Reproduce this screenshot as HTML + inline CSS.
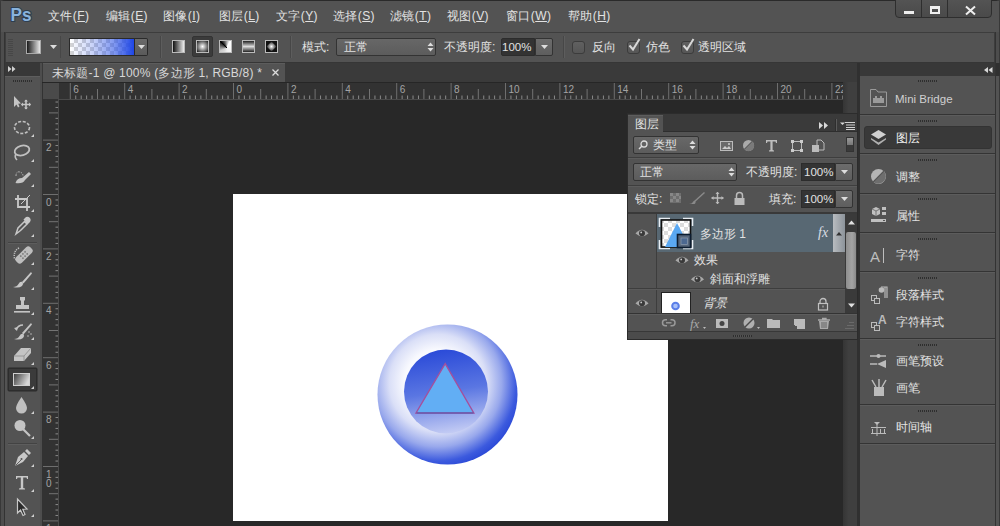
<!DOCTYPE html>
<html><head><meta charset="utf-8">
<style>
*{margin:0;padding:0;box-sizing:border-box}
html,body{width:1000px;height:526px;overflow:hidden;background:#3c3c3c;font-family:"Liberation Sans",sans-serif;color:#dcdcdc}
.a{position:absolute}
svg{position:absolute;overflow:visible}
.t{position:absolute;white-space:nowrap;font-size:12px;line-height:14px;color:#e2e2e2}
/* frame */
#frame{left:0;top:0;width:1000px;height:526px;background:#4d4d4d;border-left:1px solid #383838;border-right:1px solid #383838;border-top:1px solid #2a2a2a;border-radius:5px 5px 0 0}
#menubar{left:1px;top:1px;width:998px;height:31px;background:#535353}
#opts{left:5px;top:32px;width:990px;height:31px;background:#535353;border:1px solid #3d3d3d;border-bottom-color:#363636}
#work{left:42px;top:63px;width:816px;height:463px;background:#282828}
#tabrow{left:42px;top:63px;width:816px;height:19px;background:#3a3a3a}
#tab{left:43px;top:63px;width:242px;height:19px;background:#535353;border-top:1px solid #5c5c5c}
#toolhdr{left:5px;top:63px;width:35px;height:13px;background:#383838}
#tools{left:5px;top:76px;width:35px;height:450px;background:#535353;border-top:1px solid #5e5e5e}
#rulerh{left:42px;top:82px;width:801px;height:18px;background:#323232;border-top:1px solid #262626}
#rulerv{left:42px;top:99px;width:17px;height:427px;background:#323232}
#corner{left:43px;top:83px;width:16px;height:16px;background:#4a4a4a}
#vscroll{left:843px;top:82px;width:14px;height:444px;background:linear-gradient(90deg,#353535,#3f3f3f 40%)}
#doc{left:233px;top:194px;width:435px;height:327px;background:#fff}
#dock{left:857px;top:63px;width:143px;height:463px;background:#303030}
#dockhdr{left:860px;top:63px;width:135px;height:13px;background:#383838}
#dockbody{left:860px;top:76px;width:140px;height:450px;background:#535353;border-right:1px solid #383838}
#dockline{left:995px;top:32px;width:1px;height:494px;background:#333}
#leftline{left:4px;top:32px;width:1px;height:494px;background:#333}
.rn{position:absolute;font-size:10px;line-height:10px;color:#a4a4a4;font-family:"Liberation Sans",sans-serif}
.sep{position:absolute;left:860px;width:135px;height:2px;background:#343434;border-bottom:1px solid #5c5c5c}
.grip{position:absolute;width:19px;height:2px;background:repeating-linear-gradient(90deg,#2e2e2e 0 1px,#535353 1px 2px)}
#layers{left:627px;top:113px;width:231px;height:227px;background:#535353;border:1px solid #2c2c2c}
</style></head><body>
<div id="frame" class="a"></div>
<div id="menubar" class="a"></div>
<svg style="left:0;top:0" width="60" height="32"><text x="10.5" y="21" font-family="Liberation Sans" font-weight="700" font-size="19" fill="#2a3c52" stroke="#2e3e50" stroke-width="2.2" textLength="21" lengthAdjust="spacingAndGlyphs">Ps</text><text x="10.5" y="21" font-family="Liberation Sans" font-weight="700" font-size="19" fill="#88b2dc" textLength="21" lengthAdjust="spacingAndGlyphs">Ps</text></svg>
<div class="t" style="left:48px;top:9px;letter-spacing:0.4px">文件(<u>F</u>)</div>
<div class="t" style="left:106px;top:9px;letter-spacing:0.4px">编辑(<u>E</u>)</div>
<div class="t" style="left:163px;top:9px;letter-spacing:0.4px">图像(<u>I</u>)</div>
<div class="t" style="left:219px;top:9px;letter-spacing:0.4px">图层(<u>L</u>)</div>
<div class="t" style="left:276px;top:9px;letter-spacing:0.4px">文字(<u>Y</u>)</div>
<div class="t" style="left:333px;top:9px;letter-spacing:0.4px">选择(<u>S</u>)</div>
<div class="t" style="left:390px;top:9px;letter-spacing:0.4px">滤镜(<u>T</u>)</div>
<div class="t" style="left:447px;top:9px;letter-spacing:0.4px">视图(<u>V</u>)</div>
<div class="t" style="left:506px;top:9px;letter-spacing:0.4px">窗口(<u>W</u>)</div>
<div class="t" style="left:568px;top:9px;letter-spacing:0.4px">帮助(<u>H</u>)</div>
<!-- window buttons -->
<div class="a" style="left:895px;top:-4px;width:97px;height:22px;background:linear-gradient(#555,#4a4a4a);border:1px solid #2e2e2e;border-radius:4px"></div>
<div class="a" style="left:921px;top:0;width:1px;height:18px;background:#2e2e2e"></div>
<div class="a" style="left:947px;top:0;width:1px;height:18px;background:#2e2e2e"></div>
<div class="a" style="left:904px;top:11px;width:10px;height:3px;background:#eee"></div>
<div class="a" style="left:930px;top:6px;width:10px;height:8px;border:2px solid #eee;border-top-width:3px"></div>
<svg style="left:965px;top:6px" width="11" height="9"><path d="M1 0.5 L10 8.5 M10 0.5 L1 8.5" stroke="#eee" stroke-width="2"/></svg>

<div id="opts" class="a"></div>

<!-- options bar content -->
<div class="a" style="left:8px;top:39px;width:5px;height:17px;background:repeating-linear-gradient(#474747 0 1px,transparent 1px 2px)"></div>
<div class="a" style="left:26px;top:40px;width:15px;height:14px;border:1px solid #aaa;background:linear-gradient(90deg,#1a1a1a,#e8e8e8)"></div>
<svg style="left:50px;top:45px" width="7" height="5"><path d="M0 0 L7 0 L3.5 4Z" fill="#ddd"/></svg>
<div class="a" style="left:60px;top:36px;width:1px;height:22px;background:#474747"></div>
<div class="a" style="left:69px;top:38px;width:66px;height:18px;border:1px solid #2a2a2a;background:linear-gradient(90deg,rgba(40,80,230,0) 0%,rgba(40,80,230,0.25) 35%,rgba(40,80,230,0.6) 70%,rgba(30,70,230,1) 100%),repeating-conic-gradient(#d4d4d4 0 25%,#fff 0 50%) 0 0/8px 8px"></div>
<div class="a" style="left:135px;top:38px;width:13px;height:18px;background:linear-gradient(#6a6a6a,#5a5a5a);border:1px solid #2a2a2a;border-left:0;border-radius:0 2px 2px 0"></div>
<svg style="left:138px;top:45px" width="7" height="5"><path d="M0 0 L7 0 L3.5 4Z" fill="#ddd"/></svg>
<div class="a" style="left:160px;top:36px;width:1px;height:22px;background:#474747"></div>
<div class="a" style="left:161px;top:36px;width:1px;height:22px;background:#5d5d5d"></div>
<div class="a" style="left:172px;top:40px;width:13px;height:13px;border:1px solid #bbb;background:linear-gradient(90deg,#111,#eee)"></div>
<div class="a" style="left:192px;top:36px;width:21px;height:21px;background:#3b3b3b;border:1px solid #333;border-radius:2px"></div>
<div class="a" style="left:196px;top:40px;width:13px;height:13px;border:1px solid #bbb;background:radial-gradient(circle,#fff 0,#222 95%)"></div>
<div class="a" style="left:219px;top:40px;width:13px;height:13px;border:1px solid #bbb;background:conic-gradient(from 315deg at 60% 60%,#000,#fff 20%,#f0f0f0 60%,#ccc 80%,#333 97%,#000)"></div>
<div class="a" style="left:242px;top:40px;width:13px;height:13px;border:1px solid #bbb;background:linear-gradient(#222,#ddd 50%,#222)"></div>
<div class="a" style="left:265px;top:40px;width:13px;height:13px;border:1px solid #bbb;background:#111"></div><svg style="left:266px;top:41px" width="11" height="11"><defs><radialGradient id="dg"><stop offset="0" stop-color="#fff"/><stop offset="1" stop-color="#222"/></radialGradient></defs><path d="M5.5 0.5 L10.5 5.5 L5.5 10.5 L0.5 5.5Z" fill="url(#dg)"/></svg>
<div class="a" style="left:290px;top:36px;width:1px;height:22px;background:#474747"></div>
<div class="a" style="left:291px;top:36px;width:1px;height:22px;background:#5d5d5d"></div>
<div class="t" style="left:302px;top:40px">模式:</div>
<div class="a" style="left:336px;top:38px;width:100px;height:18px;background:linear-gradient(#676767,#5c5c5c);border:1px solid #333;border-radius:2px"></div>
<div class="t" style="left:344px;top:40px">正常</div>
<svg style="left:427px;top:42px" width="7" height="10"><path d="M0.5 4 L3.5 0.5 L6.5 4Z M0.5 6 L3.5 9.5 L6.5 6Z" fill="#ddd"/></svg>
<div class="t" style="left:444px;top:40px">不透明度:</div>
<div class="a" style="left:501px;top:38px;width:34px;height:18px;background:#333;border:1px solid #2c2c2c;border-radius:2px 0 0 2px"></div>
<div class="t" style="left:502px;top:40px;font-size:11.5px">100%</div>
<div class="a" style="left:535px;top:38px;width:18px;height:18px;background:linear-gradient(#6c6c6c,#5e5e5e);border:1px solid #333;border-radius:0 2px 2px 0"></div>
<svg style="left:541px;top:45px" width="7" height="5"><path d="M0 0 L7 0 L3.5 4Z" fill="#ddd"/></svg>
<div class="a" style="left:563px;top:36px;width:1px;height:22px;background:#474747"></div>
<div class="a" style="left:564px;top:36px;width:1px;height:22px;background:#5d5d5d"></div>
<div class="a" style="left:572px;top:41px;width:13px;height:13px;background:linear-gradient(#606060,#565656);border:1px solid #3c3c3c;border-radius:3px"></div>
<div class="t" style="left:592px;top:40px">反向</div>
<div class="a" style="left:627px;top:41px;width:13px;height:13px;background:linear-gradient(#606060,#565656);border:1px solid #3c3c3c;border-radius:3px"></div>
<svg style="left:627px;top:38px" width="15" height="15"><path d="M2.5 7.5 L6 11.5 L12.5 1" stroke="#d8d8d8" stroke-width="2" fill="none"/></svg>
<div class="t" style="left:646px;top:40px">仿色</div>
<div class="a" style="left:681px;top:41px;width:13px;height:13px;background:linear-gradient(#606060,#565656);border:1px solid #3c3c3c;border-radius:3px"></div>
<svg style="left:681px;top:38px" width="15" height="15"><path d="M2.5 7.5 L6 11.5 L12.5 1" stroke="#d8d8d8" stroke-width="2" fill="none"/></svg>
<div class="t" style="left:698px;top:40px">透明区域</div>
<div id="work" class="a"></div>
<div id="tabrow" class="a"></div>
<div id="tab" class="a"></div>

<div class="t" style="left:52px;top:66px;font-size:12px;color:#d8d8d8;letter-spacing:0.2px">未标题-1 @ 100% (多边形 1, RGB/8) *</div>
<svg style="left:272px;top:69px" width="7" height="7"><path d="M0.5 0.5 L6.5 6.5 M6.5 0.5 L0.5 6.5" stroke="#ddd" stroke-width="1.3"/></svg>
<div id="toolhdr" class="a"></div>
<svg style="left:8px;top:66px" width="8" height="6"><path d="M0 0 L3.5 3 L0 6Z M4 0 L7.5 3 L4 6Z" fill="#d0d0d0"/></svg>

<div id="tools" class="a"></div>

<svg style="left:0;top:0" width="45" height="526">
<path d="M13 81 h20" stroke="#2e2e2e" stroke-dasharray="1 1" stroke-width="2"/>
<!-- move -->
<path d="M14 96 L14 107 L16.5 104.5 L18 107.5 L19.5 106.5 L18.2 103.8 L21 103.5Z" fill="#c4c4c4"/>
<path d="M26 100 V109 M21.5 104.5 H30.5" stroke="#c4c4c4" stroke-width="1.6"/>
<path d="M24 101.5 L26 99.5 L28 101.5Z M24 107.5 L26 109.5 L28 107.5Z M23 102.5 L21 104.5 L23 106.5Z M29 102.5 L31 104.5 L29 106.5Z" fill="#c4c4c4"/>
<!-- marquee -->
<ellipse cx="22" cy="127.5" rx="7.5" ry="6" fill="none" stroke="#c0c0c0" stroke-width="1.6" stroke-dasharray="3 1.6"/>
<!-- lasso -->
<ellipse cx="22" cy="150.5" rx="7.5" ry="4.8" fill="none" stroke="#c0c0c0" stroke-width="1.8" transform="rotate(-15 22 150.5)"/>
<path d="M16 154 Q14 157 17 160" stroke="#c0c0c0" stroke-width="1.6" fill="none"/>
<!-- quick select -->
<path d="M16 176 Q16 171 20 172 Q23 173 23 176" stroke="#b8b8b8" stroke-width="1" stroke-dasharray="1.5 1" fill="none"/>
<path d="M15.5 183 Q17 178 22 178 L29 172 L31 174 L25 180 Q23 184 15.5 183Z" fill="#c4c4c4"/>
<!-- crop -->
<path d="M18 195 V207 H30 M15 199 H27 V211" stroke="#c8c8c8" stroke-width="1.8" fill="none"/>
<path d="M21 204 L30 195" stroke="#c8c8c8" stroke-width="1"/>
<!-- eyedropper -->
<path d="M16 234 L18 228 L24.5 221.5 L27 224 L20.5 230.5Z" fill="none" stroke="#c8c8c8" stroke-width="1.5"/>
<path d="M23.5 219.5 L26 217 Q28 216 30 218 Q31.5 220 30 222 L27.5 224.5Z" fill="#c8c8c8"/>
<rect x="8" y="242" width="29" height="1" fill="#434343"/><rect x="8" y="243" width="29" height="1" fill="#5d5d5d"/>
<!-- healing -->
<g transform="rotate(-45 24 255)"><rect x="14" y="251" width="20" height="8" rx="3" fill="#bdbdbd"/><g fill="#7a7a7a"><circle cx="21" cy="253.5" r="0.9"/><circle cx="24" cy="253.5" r="0.9"/><circle cx="27" cy="253.5" r="0.9"/><circle cx="21" cy="256.5" r="0.9"/><circle cx="24" cy="256.5" r="0.9"/><circle cx="27" cy="256.5" r="0.9"/></g></g>
<path d="M19 248 Q13 251 14.5 259" stroke="#bdbdbd" stroke-width="1.5" stroke-dasharray="1.2 1" fill="none"/>
<!-- brush -->
<path d="M31 272 L22 282 L23.5 283.5 L32 273.5Z" fill="#c8c8c8"/>
<path d="M13 287 Q17 287 18.5 284 Q20 281 22.5 282 Q24 284 22 286 Q19 288.5 13 287Z" fill="#c8c8c8"/>
<!-- stamp -->
<path d="M20 297 h5 v3 l-1 1 v4 h5 v4 h-13 v-4 h5 v-4 l-1 -1z" fill="#c4c4c4"/>
<rect x="14" y="311" width="16" height="1.6" fill="#c4c4c4"/>
<!-- history brush -->
<path d="M31 323 L22 333 L23.5 334.5 L32 324.5Z" fill="#c4c4c4"/>
<path d="M14 339 Q18 339 19.5 336 Q21 333 23.5 334 Q25 336 23 338 Q20 340.5 14 339Z" fill="#c4c4c4"/>
<path d="M16 330 Q18 325 23 325" stroke="#c4c4c4" stroke-width="1.4" fill="none"/>
<path d="M14 328 L17 331 L18 327Z" fill="#c4c4c4"/>
<g fill="#bbb"><circle cx="29" cy="332" r="0.8"/><circle cx="31" cy="334" r="0.8"/><circle cx="28" cy="336" r="0.8"/></g>
<!-- eraser -->
<path d="M14 356 L21 348 L31 348 L31 353 L24 361 L14 361Z" fill="#c4c4c4"/>
<path d="M14 356 L24 356 L31 348 M24 356 V361" stroke="#8a8a8a" stroke-width="0.8" fill="none"/>
<!-- gradient selected -->
<rect x="8" y="368" width="29" height="23" rx="1" fill="#303030" stroke="#2a2a2a"/>
<rect x="9" y="369" width="27" height="21" fill="#3b3b3b"/>
<rect x="13.5" y="373.5" width="16" height="12" fill="url(#gr)" stroke="#d0d0d0" stroke-width="1"/>
<defs><linearGradient id="gr" x1="0" y1="0" x2="1" y2="0.4"><stop offset="0" stop-color="#3a3a3a"/><stop offset="1" stop-color="#d8d8d8"/></linearGradient></defs>
<!-- blur -->
<path d="M21.5 397 Q16 405 16 408 A5.5 5.5 0 0 0 27 408 Q27 405 21.5 397Z" fill="#c0c0c0"/>
<!-- dodge -->
<circle cx="20" cy="425.5" r="5.5" fill="#c4c4c4"/>
<path d="M23 429 L30 436" stroke="#c4c4c4" stroke-width="2.2"/>
<rect x="8" y="443" width="29" height="1" fill="#434343"/><rect x="8" y="444" width="29" height="1" fill="#5d5d5d"/>
<!-- pen -->
<path d="M15 466 L18 457 L24 452 L28 456 L23 462Z" fill="#c8c8c8"/>
<path d="M25 451 L27 449 L31 453 L29 455Z" fill="#c8c8c8"/>
<path d="M15.5 465.5 L21 460" stroke="#535353" stroke-width="0.9"/>
<circle cx="21.5" cy="459" r="1" fill="#535353"/>
<!-- type -->
<path d="M16 476 H28 V479 H27 L26.5 477.5 H23.2 V488 L25 488.6 V489.5 H19 V488.6 L20.8 488 V477.5 H17.5 L17 479 H16Z" fill="#c8c8c8"/>
<!-- path select -->
<path d="M17.5 499 L17.5 513 L20.5 510 L23 515.5 L25 514.5 L22.8 509.2 L27 509Z" fill="#2a2a2a" stroke="#c8c8c8" stroke-width="1.2"/>
<!-- little triangles -->
<g fill="#d0d0d0">
<path d="M31 137 h3 v-3z"/><path d="M31 162 h3 v-3z"/><path d="M31 187 h3 v-3z"/><path d="M31 212 h3 v-3z"/><path d="M31 237 h3 v-3z"/>
<path d="M31 265 h3 v-3z"/><path d="M31 290 h3 v-3z"/><path d="M31 315 h3 v-3z"/><path d="M31 340 h3 v-3z"/><path d="M31 365 h3 v-3z"/>
<path d="M31 389 h3 v-3z"/><path d="M31 414 h3 v-3z"/><path d="M31 439 h3 v-3z"/><path d="M31 467 h3 v-3z"/><path d="M31 492 h3 v-3z"/><path d="M31 517 h3 v-3z"/>
</g>
</svg>
<div id="rulerh" class="a"></div>
<div id="rulerv" class="a"></div>
<div id="corner" class="a"></div>
<svg style="left:0;top:0" width="1000" height="526">
<path d="M70.30 83V99 M124.70 83V99 M179.10 83V99 M233.50 83V99 M287.90 83V99 M342.30 83V99 M396.70 83V99 M451.10 83V99 M505.50 83V99 M559.90 83V99 M614.30 83V99 M668.70 83V99 M723.10 83V99 M777.50 83V99 M831.90 83V99 M43 140.10H59 M43 194.50H59 M43 248.90H59 M43 303.30H59 M43 357.70H59 M43 412.10H59 M43 466.50H59 M43 520.90H59" stroke="#6e6e6e" stroke-width="1" fill="none"/>
<path d="M97.50 89V99 M151.90 89V99 M206.30 89V99 M260.70 89V99 M315.10 89V99 M369.50 89V99 M423.90 89V99 M478.30 89V99 M532.70 89V99 M587.10 89V99 M641.50 89V99 M695.90 89V99 M750.30 89V99 M804.70 89V99 M49 112.90H59 M49 167.30H59 M49 221.70H59 M49 276.10H59 M49 330.50H59 M49 384.90H59 M49 439.30H59 M49 493.70H59" stroke="#737373" stroke-width="1" fill="none"/>
<path d="M75.74 95.5V99 M81.18 95.5V99 M86.62 95.5V99 M92.06 95.5V99 M102.94 95.5V99 M108.38 95.5V99 M113.82 95.5V99 M119.26 95.5V99 M130.14 95.5V99 M135.58 95.5V99 M141.02 95.5V99 M146.46 95.5V99 M157.34 95.5V99 M162.78 95.5V99 M168.22 95.5V99 M173.66 95.5V99 M184.54 95.5V99 M189.98 95.5V99 M195.42 95.5V99 M200.86 95.5V99 M211.74 95.5V99 M217.18 95.5V99 M222.62 95.5V99 M228.06 95.5V99 M238.94 95.5V99 M244.38 95.5V99 M249.82 95.5V99 M255.26 95.5V99 M266.14 95.5V99 M271.58 95.5V99 M277.02 95.5V99 M282.46 95.5V99 M293.34 95.5V99 M298.78 95.5V99 M304.22 95.5V99 M309.66 95.5V99 M320.54 95.5V99 M325.98 95.5V99 M331.42 95.5V99 M336.86 95.5V99 M347.74 95.5V99 M353.18 95.5V99 M358.62 95.5V99 M364.06 95.5V99 M374.94 95.5V99 M380.38 95.5V99 M385.82 95.5V99 M391.26 95.5V99 M402.14 95.5V99 M407.58 95.5V99 M413.02 95.5V99 M418.46 95.5V99 M429.34 95.5V99 M434.78 95.5V99 M440.22 95.5V99 M445.66 95.5V99 M456.54 95.5V99 M461.98 95.5V99 M467.42 95.5V99 M472.86 95.5V99 M483.74 95.5V99 M489.18 95.5V99 M494.62 95.5V99 M500.06 95.5V99 M510.94 95.5V99 M516.38 95.5V99 M521.82 95.5V99 M527.26 95.5V99 M538.14 95.5V99 M543.58 95.5V99 M549.02 95.5V99 M554.46 95.5V99 M565.34 95.5V99 M570.78 95.5V99 M576.22 95.5V99 M581.66 95.5V99 M592.54 95.5V99 M597.98 95.5V99 M603.42 95.5V99 M608.86 95.5V99 M619.74 95.5V99 M625.18 95.5V99 M630.62 95.5V99 M636.06 95.5V99 M646.94 95.5V99 M652.38 95.5V99 M657.82 95.5V99 M663.26 95.5V99 M674.14 95.5V99 M679.58 95.5V99 M685.02 95.5V99 M690.46 95.5V99 M701.34 95.5V99 M706.78 95.5V99 M712.22 95.5V99 M717.66 95.5V99 M728.54 95.5V99 M733.98 95.5V99 M739.42 95.5V99 M744.86 95.5V99 M755.74 95.5V99 M761.18 95.5V99 M766.62 95.5V99 M772.06 95.5V99 M782.94 95.5V99 M788.38 95.5V99 M793.82 95.5V99 M799.26 95.5V99 M810.14 95.5V99 M815.58 95.5V99 M821.02 95.5V99 M826.46 95.5V99 M837.34 95.5V99 M842.78 95.5V99 M55.5 102.02H59 M55.5 107.46H59 M55.5 118.34H59 M55.5 123.78H59 M55.5 129.22H59 M55.5 134.66H59 M55.5 145.54H59 M55.5 150.98H59 M55.5 156.42H59 M55.5 161.86H59 M55.5 172.74H59 M55.5 178.18H59 M55.5 183.62H59 M55.5 189.06H59 M55.5 199.94H59 M55.5 205.38H59 M55.5 210.82H59 M55.5 216.26H59 M55.5 227.14H59 M55.5 232.58H59 M55.5 238.02H59 M55.5 243.46H59 M55.5 254.34H59 M55.5 259.78H59 M55.5 265.22H59 M55.5 270.66H59 M55.5 281.54H59 M55.5 286.98H59 M55.5 292.42H59 M55.5 297.86H59 M55.5 308.74H59 M55.5 314.18H59 M55.5 319.62H59 M55.5 325.06H59 M55.5 335.94H59 M55.5 341.38H59 M55.5 346.82H59 M55.5 352.26H59 M55.5 363.14H59 M55.5 368.58H59 M55.5 374.02H59 M55.5 379.46H59 M55.5 390.34H59 M55.5 395.78H59 M55.5 401.22H59 M55.5 406.66H59 M55.5 417.54H59 M55.5 422.98H59 M55.5 428.42H59 M55.5 433.86H59 M55.5 444.74H59 M55.5 450.18H59 M55.5 455.62H59 M55.5 461.06H59 M55.5 471.94H59 M55.5 477.38H59 M55.5 482.82H59 M55.5 488.26H59 M55.5 499.14H59 M55.5 504.58H59 M55.5 510.02H59 M55.5 515.46H59" stroke="#8a8a8a" stroke-width="1" fill="none"/>
<path d="M59 99.5 H843 M58.5 99 V526" stroke="#4a4a4a" stroke-width="1"/>
</svg>
<div class="rn" style="left:73.3px;top:85px">6</div>
<div class="rn" style="left:127.7px;top:85px">4</div>
<div class="rn" style="left:182.1px;top:85px">2</div>
<div class="rn" style="left:236.5px;top:85px">0</div>
<div class="rn" style="left:290.9px;top:85px">2</div>
<div class="rn" style="left:345.3px;top:85px">4</div>
<div class="rn" style="left:399.7px;top:85px">6</div>
<div class="rn" style="left:454.1px;top:85px">8</div>
<div class="rn" style="left:508.5px;top:85px">10</div>
<div class="rn" style="left:562.9px;top:85px">12</div>
<div class="rn" style="left:617.3px;top:85px">14</div>
<div class="rn" style="left:671.7px;top:85px">16</div>
<div class="rn" style="left:726.1px;top:85px">18</div>
<div class="rn" style="left:780.5px;top:85px">20</div>
<div class="rn" style="left:834.9px;top:85px">22</div>
<div class="rn" style="left:46px;top:143.1px">2</div>
<div class="rn" style="left:46px;top:197.5px">0</div>
<div class="rn" style="left:46px;top:251.9px">2</div>
<div class="rn" style="left:46px;top:306.3px">4</div>
<div class="rn" style="left:46px;top:360.7px">6</div>
<div class="rn" style="left:46px;top:415.1px">8</div>
<div class="rn" style="left:46px;top:469.5px">1</div>
<div class="rn" style="left:46px;top:478.5px">0</div>
<div class="rn" style="left:46px;top:523.9px">1</div>
<div class="rn" style="left:46px;top:532.9px">2</div>
<div id="vscroll" class="a"></div>
<div id="doc" class="a"></div>

<svg style="left:370px;top:318px" width="156" height="156">
<defs>
<radialGradient id="og" gradientUnits="userSpaceOnUse" cx="68" cy="65" r="84" fx="68" fy="65">
<stop offset="0" stop-color="#ffffff"/>
<stop offset="0.4" stop-color="#f8f9fe"/>
<stop offset="0.58" stop-color="#dadff7"/>
<stop offset="0.76" stop-color="#98a8ec"/>
<stop offset="0.93" stop-color="#3c5ade"/>
<stop offset="1" stop-color="#2e4cd8"/>
</radialGradient>
<linearGradient id="ig" x1="0.4" y1="0" x2="0.55" y2="1">
<stop offset="0" stop-color="#2a4ad8"/>
<stop offset="0.5" stop-color="#5a76e2"/>
<stop offset="1" stop-color="#c4ccf4"/>
</linearGradient>
</defs>
<circle cx="77.5" cy="76.5" r="70" fill="url(#og)"/>
<circle cx="76" cy="73.5" r="42" fill="url(#ig)"/>
<path d="M75.2 45.7 L46 95 L103.8 95Z" fill="#62aef4" stroke="#a4509c" stroke-width="1.4"/>
<path d="M46.5 95 H103.5" stroke="#4a5ab0" stroke-width="1.2"/>
</svg>
<div id="dock" class="a"></div>
<div id="dockhdr" class="a"></div>
<div id="dockbody" class="a"></div><div id="dockline" class="a"></div><div id="leftline" class="a"></div>
<div id="layers" class="a"></div>
<!-- layers panel -->
<div class="a" style="left:628px;top:114px;width:229px;height:18px;background:#3a3a3a;border-bottom:1px solid #2e2e2e"></div>
<div class="a" style="left:628px;top:115px;width:35px;height:18px;background:#535353;border-top:1px solid #5d5d5d"></div>
<div class="t" style="left:635px;top:117px">图层</div>
<svg style="left:819px;top:122px" width="10" height="7"><path d="M0 0 L4 3.5 L0 7Z M5 0 L9 3.5 L5 7Z" fill="#d8d8d8"/></svg>
<div class="a" style="left:835px;top:119px;width:1px;height:12px;background:#2e2e2e"></div><div class="a" style="left:836px;top:119px;width:1px;height:12px;background:#5a5a5a"></div>
<svg style="left:840px;top:121px" width="16" height="9"><path d="M0 1.5 H5 L2.5 4Z" fill="#d8d8d8"/><path d="M5 1.5 H15 M6 4 H15 M6 6.5 H15 M6 8.5 H15" stroke="#d0d0d0" stroke-width="1"/></svg>
<!-- filter row -->
<div class="a" style="left:633px;top:136px;width:66px;height:18px;background:linear-gradient(#686868,#5c5c5c);border:1px solid #333;border-radius:2px"></div>
<svg style="left:638px;top:140px" width="10" height="10"><circle cx="6" cy="4" r="3" stroke="#ddd" stroke-width="1.3" fill="none"/><path d="M4 6 L1 9" stroke="#ddd" stroke-width="1.5"/></svg>
<div class="t" style="left:653px;top:138px">类型</div>
<svg style="left:689px;top:140px" width="7" height="10"><path d="M0.5 4 L3.5 0.5 L6.5 4Z M0.5 6 L3.5 9.5 L6.5 6Z" fill="#ddd"/></svg>
<svg style="left:718px;top:138px" width="110" height="16">
<rect x="2.5" y="3.5" width="12" height="9" fill="#6a6a6a" stroke="#bbb"/><path d="M4 11 L7 8 L9 10 L11 8 L13 11Z" fill="#ccc"/><circle cx="11" cy="6" r="1" fill="#ccc"/>
<circle cx="30.5" cy="7.5" r="5.5" fill="#aaa"/><path d="M26.5 11.5 L34.5 3.5" stroke="#4a4a4a" stroke-width="1.5"/><path d="M34.5 3.5 A5.5 5.5 0 0 1 26.5 11.5Z" fill="#7a7a7a"/>
<path d="M48 2 H59 V5 H58 L57.5 3.5 H54.6 V12 L56 12.6 V13.5 H51 V12.6 L52.4 12 V3.5 H49.5 L49 5 H48Z" fill="#bdbdbd"/>
<rect x="74.5" y="3.5" width="9" height="9" fill="none" stroke="#bbb"/><g fill="#ccc"><rect x="73" y="2" width="3" height="3"/><rect x="82" y="2" width="3" height="3"/><rect x="73" y="11" width="3" height="3"/><rect x="82" y="11" width="3" height="3"/></g>
<path d="M99 2 H103 L106 5 V12 H99Z" fill="none" stroke="#bbb"/><rect x="94" y="7" width="7" height="7" fill="#bbb"/>
</svg>
<div class="a" style="left:846px;top:137px;width:8px;height:15px;background:#3a3a3a;border:1px solid #333"></div>
<div class="a" style="left:847px;top:138px;width:6px;height:7px;background:linear-gradient(#9a9a9a,#777)"></div>
<div class="a" style="left:628px;top:157px;width:229px;height:1px;background:#3e3e3e"></div><div class="a" style="left:628px;top:158px;width:229px;height:1px;background:#5c5c5c"></div>
<!-- blend row -->
<div class="a" style="left:633px;top:163px;width:104px;height:18px;background:linear-gradient(#686868,#5c5c5c);border:1px solid #333;border-radius:2px"></div>
<div class="t" style="left:640px;top:165px">正常</div>
<svg style="left:728px;top:167px" width="7" height="10"><path d="M0.5 4 L3.5 0.5 L6.5 4Z M0.5 6 L3.5 9.5 L6.5 6Z" fill="#ddd"/></svg>
<div class="t" style="left:746px;top:165px">不透明度:</div>
<div class="a" style="left:801px;top:163px;width:34px;height:18px;background:#343434;border:1px solid #2c2c2c"></div>
<div class="t" style="left:804px;top:165px;font-size:11.5px">100%</div>
<div class="a" style="left:835px;top:163px;width:18px;height:18px;background:linear-gradient(#6c6c6c,#5e5e5e);border:1px solid #333;border-radius:0 2px 2px 0"></div>
<svg style="left:841px;top:170px" width="7" height="5"><path d="M0 0 L7 0 L3.5 4Z" fill="#ddd"/></svg>
<div class="a" style="left:628px;top:185px;width:229px;height:1px;background:#3e3e3e"></div><div class="a" style="left:628px;top:186px;width:229px;height:1px;background:#5c5c5c"></div>
<!-- lock row -->
<div class="t" style="left:635px;top:192px">锁定:</div>
<svg style="left:668px;top:190px" width="80" height="16">
<g fill="#6e6e6e"><rect x="2" y="3" width="11" height="10"/></g><g fill="#878787"><rect x="2" y="3" width="3" height="3"/><rect x="8" y="3" width="3" height="3"/><rect x="5" y="6" width="3" height="3"/><rect x="11" y="6" width="2" height="3"/><rect x="2" y="9" width="3" height="3"/><rect x="8" y="9" width="3" height="3"/></g>
<path d="M36 2 L26 11 L27 12 L37 3Z" fill="#8a8a8a"/><path d="M21 14 Q24 14 25 12 Q26 10 27.5 11.5 Q28 13 26.5 14Z" fill="#8a8a8a"/>
<path d="M49.5 2 V14 M43.5 8 H55.5" stroke="#bbb" stroke-width="1.4"/><path d="M47.5 4 L49.5 2 L51.5 4Z M47.5 12 L49.5 14 L51.5 12Z M45.5 6 L43.5 8 L45.5 10Z M53.5 6 L55.5 8 L53.5 10Z" fill="#bbb"/>
<path d="M68.5 8 V5.5 A3 3 0 0 1 74.5 5.5 V8" stroke="#bbb" stroke-width="1.5" fill="none"/><rect x="66.5" y="8" width="10" height="7" fill="#bbb"/>
</svg>
<div class="t" style="left:769px;top:192px">填充:</div>
<div class="a" style="left:801px;top:190px;width:34px;height:18px;background:#343434;border:1px solid #2c2c2c"></div>
<div class="t" style="left:804px;top:192px;font-size:11.5px">100%</div>
<div class="a" style="left:835px;top:190px;width:18px;height:18px;background:linear-gradient(#6c6c6c,#5e5e5e);border:1px solid #333;border-radius:0 2px 2px 0"></div>
<svg style="left:841px;top:197px" width="7" height="5"><path d="M0 0 L7 0 L3.5 4Z" fill="#ddd"/></svg>
<!-- list -->
<div class="a" style="left:628px;top:212px;width:229px;height:101px;background:#535353;border-top:2px solid #393939"></div>
<div class="a" style="left:656px;top:214px;width:1px;height:99px;background:#3d3d3d"></div>
<div class="a" style="left:657px;top:214px;width:188px;height:38px;background:#586873"></div>
<div class="a" style="left:833px;top:214px;width:12px;height:38px;background:linear-gradient(90deg,#b8bcc0,#8c939a)"></div>
<svg style="left:836px;top:232px" width="6" height="4"><path d="M0 3.5 L3 0 L6 3.5Z" fill="#333"/></svg>
<div class="a" style="left:845px;top:214px;width:12px;height:99px;background:#3a3a3a"></div>
<div class="a" style="left:846px;top:232px;width:10px;height:57px;background:linear-gradient(90deg,#8e8e8e,#a4a4a4 60%,#8a8a8a);border-radius:2px"></div>
<svg style="left:848px;top:220px" width="8" height="5"><path d="M0 4.5 L3.5 0.5 L7 4.5Z" fill="#e0e0e0"/></svg>
<svg style="left:848px;top:303px" width="8" height="5"><path d="M0 0.5 L3.5 4.5 L7 0.5Z" fill="#e0e0e0"/></svg>
<!-- eyes -->
<svg style="left:0;top:0" width="1000" height="526">
<defs><g id="eye"><path d="M-6.5 0.5 Q0 -7 6.5 0.5 Q0 6 -6.5 0.5Z" fill="#a8a8a8"/><circle cy="0.3" r="3" fill="#3a3a3a"/><circle cx="-0.8" cy="-0.6" r="0.9" fill="#ccc"/></g></defs>
<use href="#eye" x="642" y="233"/><use href="#eye" x="682" y="260"/><use href="#eye" x="697.5" y="279"/><use href="#eye" x="642" y="303"/>
</svg>
<!-- thumb 1 -->
<svg style="left:655px;top:214px" width="45" height="40">
<defs><pattern id="chk" width="8" height="8" patternUnits="userSpaceOnUse" x="1" y="1"><rect width="8" height="8" fill="#fff"/><rect width="4" height="4" fill="#dcdcdc"/><rect x="4" y="4" width="4" height="4" fill="#dcdcdc"/></pattern></defs>
<path d="M4.5 13 V4.5 H15 M28 4.5 H37.5 V12 M37.5 26 V34.5 H28 M15 34.5 H4.5 V26" stroke="#e8eef4" stroke-width="1.6" fill="none"/>
<rect x="6.5" y="6" width="29" height="27" fill="url(#chk)" stroke="#111" stroke-width="1.6"/>
<path d="M10 33 L22 9 L33 30 V33Z" fill="#5aa8f2"/>
<rect x="22.5" y="20.5" width="13" height="13" fill="#56657a" stroke="#0c1c30" stroke-width="1.6"/>
<rect x="26" y="24" width="6.5" height="6.5" fill="#4c6890" stroke="#8494a8" stroke-width="0.8"/>
</svg>
<div class="t" style="left:700px;top:227px">多边形 1</div>
<div class="t" style="left:818px;top:226px;font-family:'Liberation Serif',serif;font-style:italic;font-size:14px;color:#d8dde4">fx</div>
<div class="t" style="left:694px;top:253px">效果</div>
<div class="t" style="left:710px;top:272px">斜面和浮雕</div>
<div class="a" style="left:628px;top:288px;width:217px;height:1px;background:#3d3d3d"></div><div class="a" style="left:628px;top:289px;width:217px;height:1px;background:#5a5a5a"></div>
<div class="a" style="left:661px;top:292px;width:30px;height:21px;background:#fff;border:1px solid #222;border-bottom:0"></div>
<svg style="left:668px;top:298px" width="16" height="16"><circle cx="7.5" cy="8" r="4.3" fill="#5a7ee8"/><circle cx="7.5" cy="8" r="2.3" fill="#a8c0f8"/></svg>
<div class="t" style="left:703px;top:296px;font-style:italic">背景</div>
<svg style="left:817px;top:297px" width="12" height="14"><path d="M3 6.5 V4.5 A3 3 0 0 1 9 4.5 V6.5" stroke="#c0c0c0" stroke-width="1.3" fill="none"/><rect x="1.5" y="6.5" width="9" height="6.5" fill="none" stroke="#c0c0c0" stroke-width="1.2"/><rect x="5.5" y="8.5" width="1" height="2" fill="#c0c0c0"/></svg>
<!-- bottom bar -->
<div class="a" style="left:628px;top:313px;width:229px;height:1px;background:#333"></div>
<div class="a" style="left:628px;top:314px;width:229px;height:1px;background:#5e5e5e"></div>
<svg style="left:660px;top:315px" width="200" height="16">
<path d="M7 4.8 H5.5 A3 3 0 0 0 5.5 10.8 H7 M10.5 4.8 H12 A3 3 0 0 1 12 10.8 H10.5" stroke="#9a9a9a" stroke-width="1.5" fill="none"/>
<path d="M6 7.8 H11.5" stroke="#9a9a9a" stroke-width="1.4"/>
<text x="30" y="13" font-family="Liberation Serif" font-style="italic" font-size="13" fill="#a8a8a8">fx</text><path d="M43 12 h3 l-1.5 2z" fill="#bbb"/>
<rect x="56" y="4" width="12" height="9" fill="#bbb"/><circle cx="62" cy="8.5" r="2.5" fill="#444"/>
<circle cx="89" cy="8" r="5.5" fill="#b0b0b0"/><path d="M85 12 L93 4" stroke="#4a4a4a" stroke-width="1.5"/><path d="M97 12 h3 l-1.5 2z" fill="#bbb"/>
<path d="M107 4 H112 L113 5 H120 V13 H107Z" fill="#bbb"/>
<path d="M134 4 H145 V14 H137 V11 H134Z" fill="#bbb"/><path d="M133 9 L137 13" stroke="#535353" stroke-width="1"/>
<path d="M158 5 H170 M162 3.5 H166 V5" stroke="#aaa" stroke-width="1.3" fill="none"/><path d="M159 6 H169 L168 14 H160Z" fill="#aaa"/><path d="M162 7 V13 M164 7 V13 M166 7 V13" stroke="#535353" stroke-width="0.8"/>
<g fill="#6a6a6a"><rect x="185" y="13" width="9" height="1"/><rect x="187" y="10" width="7" height="1"/><rect x="189" y="7" width="5" height="1"/></g>
</svg>
<div class="a" style="left:628px;top:331px;width:229px;height:8px;background:#4b4b4b;border-top:1px solid #383838"></div>
<div class="grip" style="left:733px;top:335px"></div>


<!-- dock -->
<svg style="left:984px;top:67px" width="9" height="6"><path d="M4 0 L0 3 L4 6Z M8.5 0 L4.5 3 L8.5 6Z" fill="#d8d8d8"/></svg>
<div class="sep" style="top:114px"></div>
<div class="sep" style="top:153px"></div>
<div class="sep" style="top:193px"></div>
<div class="sep" style="top:232px"></div>
<div class="sep" style="top:271px"></div>
<div class="sep" style="top:338px"></div>
<div class="sep" style="top:404px"></div>
<div class="sep" style="top:443px"></div>
<div class="grip" style="left:918px;top:80px"></div>
<div class="grip" style="left:918px;top:120px"></div>
<div class="grip" style="left:918px;top:159px"></div>
<div class="grip" style="left:918px;top:198px"></div>
<div class="grip" style="left:918px;top:238px"></div>
<div class="grip" style="left:918px;top:277px"></div>
<div class="grip" style="left:918px;top:344px"></div>
<div class="grip" style="left:918px;top:410px"></div>
<div class="a" style="left:864px;top:126px;width:128px;height:23px;background:#393939;border:1px solid #333;border-radius:3px"></div>
<div class="t" style="left:895px;top:92px;font-size:11.5px;color:#d0d0d0">Mini Bridge</div>
<div class="t" style="left:896px;top:131px;color:#f0f0f0">图层</div>
<div class="t" style="left:896px;top:170px">调整</div>
<div class="t" style="left:896px;top:209px">属性</div>
<div class="t" style="left:896px;top:248px">字符</div>
<div class="t" style="left:896px;top:288px">段落样式</div>
<div class="t" style="left:896px;top:315px">字符样式</div>
<div class="t" style="left:896px;top:354px">画笔预设</div>
<div class="t" style="left:896px;top:381px">画笔</div>
<div class="t" style="left:896px;top:420px">时间轴</div>
<svg style="left:0;top:0" width="1000" height="526">
<!-- mini bridge -->
<path d="M870.5 89.5 H876 L878 92 H886.5 V106.5 H870.5Z" fill="none" stroke="#9a9a9a"/>
<path d="M873 103 V98 H875 V96 H877 V98 H880 V96 H882 V98 H884 V103Z" fill="#9a9a9a"/>
<!-- layers icon -->
<path d="M878.5 130 L886 134.5 L878.5 139 L871 134.5Z" fill="#d0d0d0"/>
<path d="M871 138 L878.5 142.5 L886 138 L886 139.5 L878.5 145 L871 139.5Z" fill="#b0b0b0"/>
<!-- adjust -->
<circle cx="878.5" cy="176.5" r="7.5" fill="#b4b4b4"/><path d="M873.2 181.8 L883.8 171.2 A7.5 7.5 0 0 1 873.2 181.8Z" fill="#6e6e6e"/><path d="M873.2 181.8 L883.8 171.2" stroke="#535353" stroke-width="1.2"/>
<!-- properties -->
<path d="M872 209 L876 207 L880 209 V214 L876 216 L872 214Z" fill="#c0c0c0"/><path d="M872 209 L876 211 L880 209 M876 211 V216" stroke="#535353" stroke-width="0.7" fill="none"/>
<rect x="882" y="207" width="4" height="3" fill="#c0c0c0"/><rect x="882" y="212" width="4" height="3" fill="#c0c0c0"/>
<rect x="871" y="219" width="15" height="3" fill="#c0c0c0"/><rect x="883" y="220" width="2" height="1" fill="#535353"/>
<!-- character -->
<text x="870" y="262" font-family="Liberation Sans" font-size="15" fill="#bdbdbd">A</text><rect x="883" y="248" width="1" height="15" fill="#bdbdbd"/>
<!-- paragraph styles -->
<rect x="871.5" y="295.5" width="5" height="5" fill="none" stroke="#bbb"/><rect x="874.5" y="298.5" width="5" height="5" fill="#535353" stroke="#bbb"/>
<path d="M881 287 H887 V298 M885 287 V298" stroke="#bbb" stroke-width="1.2" fill="none"/><circle cx="881.5" cy="290" r="2.8" fill="#bbb"/>
<!-- character styles -->
<rect x="871.5" y="322.5" width="5" height="5" fill="none" stroke="#bbb"/><rect x="874.5" y="325.5" width="5" height="5" fill="#535353" stroke="#bbb"/>
<text x="878" y="324" font-family="Liberation Sans" font-weight="bold" font-size="12" fill="#bbb">A</text>
<!-- brush presets -->
<path d="M870 356 H877 M880 356 H886 M870 364 H877" stroke="#bbb" stroke-width="1.5"/><circle cx="878.5" cy="356" r="2" fill="#bbb"/>
<path d="M877 364 L886 360 L886 368Z" fill="#bbb"/>
<!-- brush -->
<rect x="874" y="387" width="10" height="9" fill="#bbb"/><path d="M876 387 L872 380 M879 387 V379 M882 387 L886 380" stroke="#bbb" stroke-width="1.5"/>
<!-- timeline -->
<path d="M871 427.5 H886 M871 433.5 H886" stroke="#bbb"/><path d="M874 422 H880 L877 425Z" fill="#bbb"/><rect x="876.5" y="424" width="1" height="12" fill="#bbb"/>
<g fill="#bbb"><rect x="872" y="429" width="1" height="4"/><rect x="880" y="429" width="1" height="4"/><rect x="884" y="429" width="1" height="4"/></g>
</svg>
</body></html>
